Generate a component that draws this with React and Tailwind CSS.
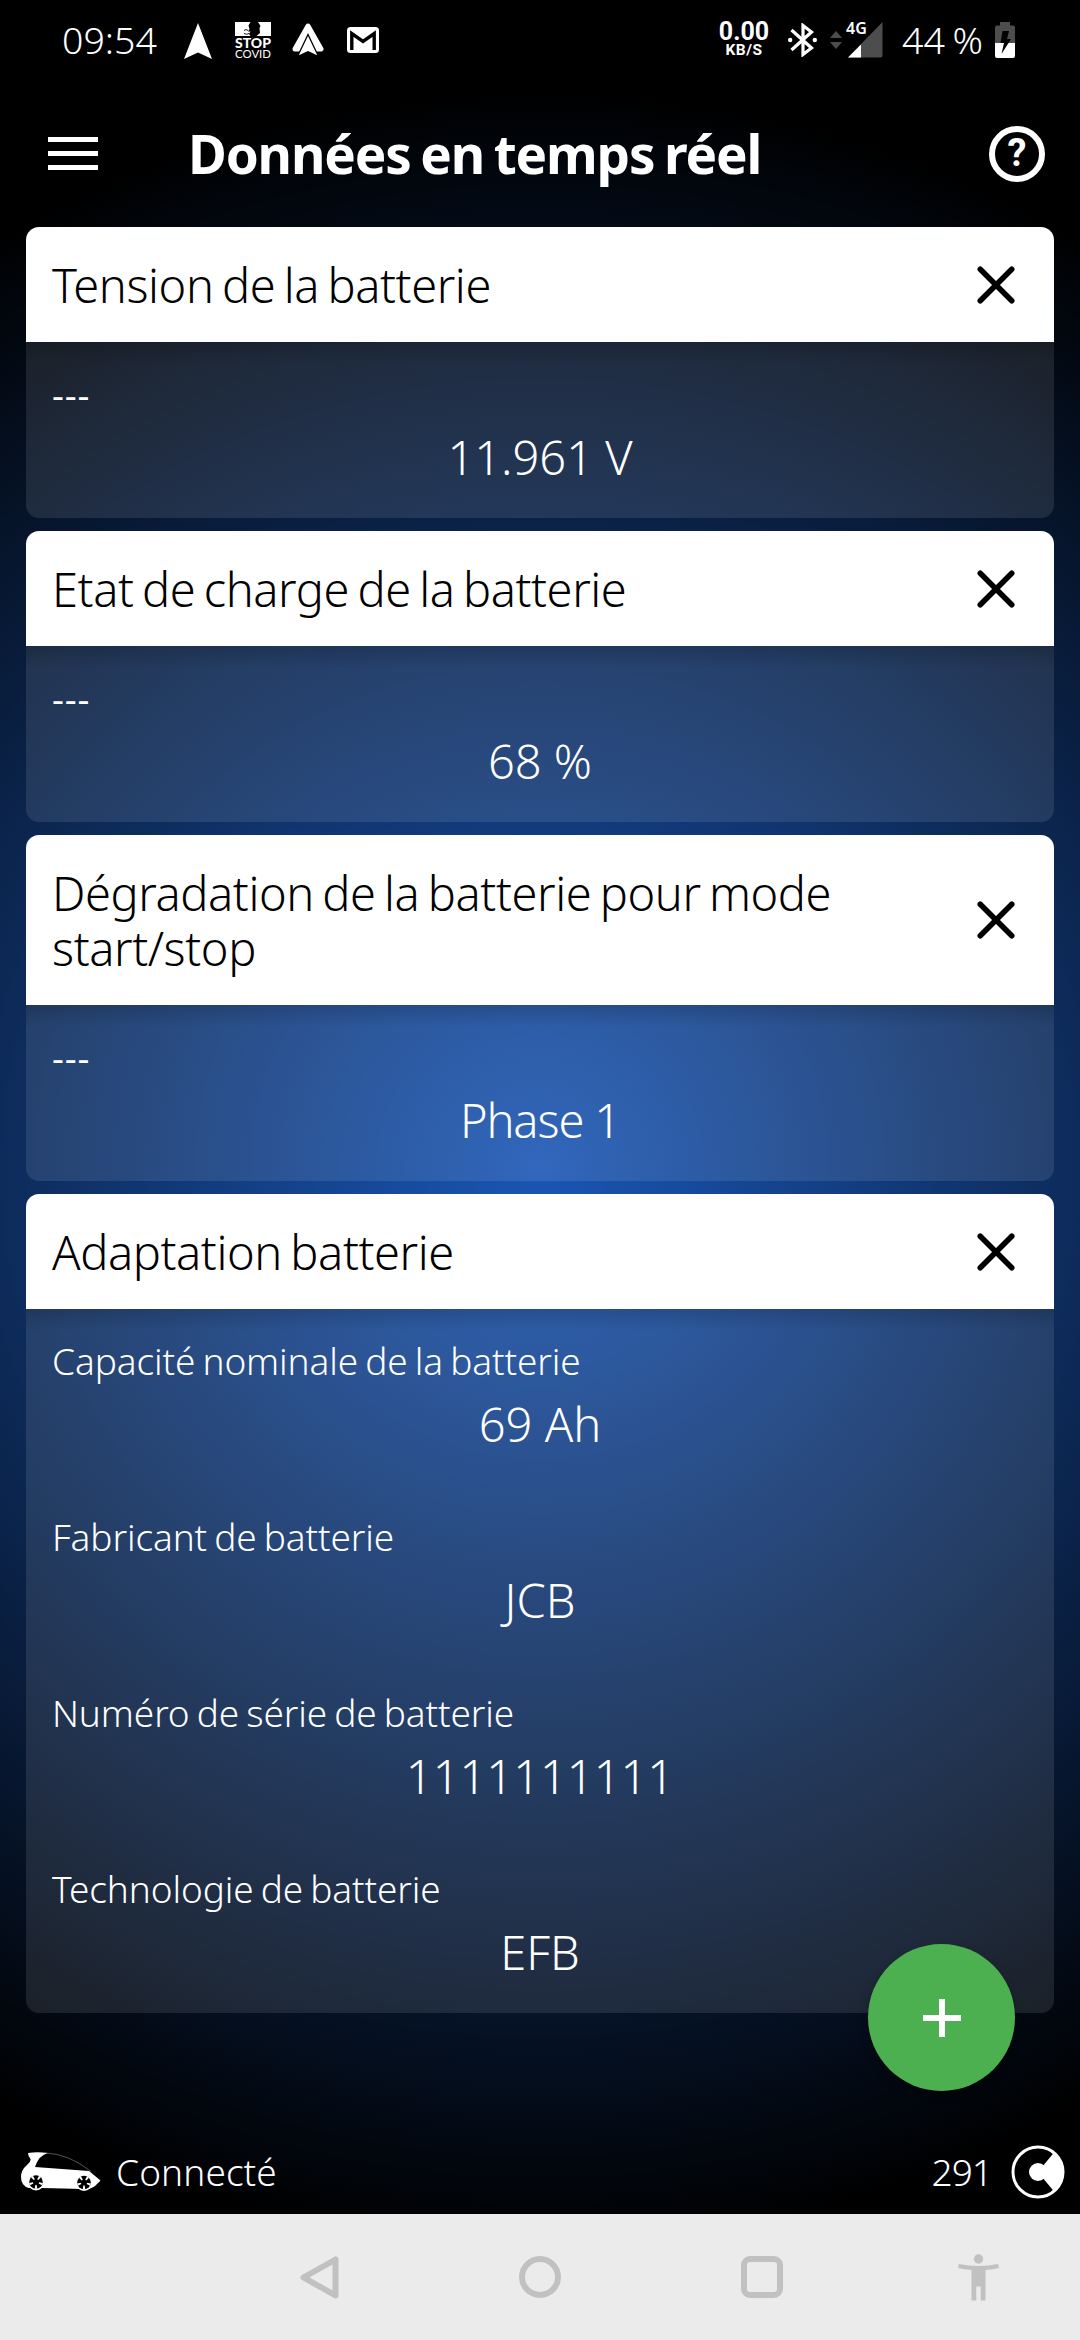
import { X } from "lucide-react";

const cards = [
  {
    title: "Tension de la batterie",
    rows: [{ label: "---", value: "11.961 V" }],
  },
  {
    title: "Etat de charge de la batterie",
    rows: [{ label: "---", value: "68 %" }],
  },
  {
    title: "Dégradation de la batterie pour mode start/stop",
    rows: [{ label: "---", value: "Phase 1" }],
  },
  {
    title: "Adaptation batterie",
    rows: [
      { label: "Capacité nominale de la batterie", value: "69 Ah" },
      { label: "Fabricant de batterie", value: "JCB" },
      { label: "Numéro de série de batterie", value: "1111111111" },
      { label: "Technologie de batterie", value: "EFB" },
    ],
  },
];

const StopCovidIcon = () => (
  <svg
    className="ml-[23px] h-[36px] w-[36px] overflow-visible"
    viewBox="0 0 36 36"
    fill="white"
  >
    <path d="M0 0H15.5L13.5 3.5L14.5 7L13 9.5H15.5L14 12L15.5 14H0Z" />
    <path d="M23 0H36V14H21.5L25 11L24.5 6L25.5 4Z" />
    <path
      d="M9 8.5q2-2 4 0M9 11.5q3 1.5 5 0"
      stroke="black"
      strokeWidth="0.9"
      fill="none"
    />
    <text
      x="0"
      y="26"
      textLength="36"
      lengthAdjust="spacingAndGlyphs"
      className="font-['Lato',sans-serif] text-[13px] font-black"
    >
      STOP
    </text>
    <text
      x="0"
      y="36"
      textLength="36"
      lengthAdjust="spacingAndGlyphs"
      className="font-['Lato',sans-serif] text-[11px]"
    >
      COVID
    </text>
  </svg>
);

const StatusBar = () => (
  <div className="flex h-[80px] items-center pl-[62px]">
    <span className="w-[122px] text-[37.5px] font-[350]">09:54</span>
    <svg className="mt-[2px] h-[36px] w-[28px]" viewBox="0 0 28 36" fill="white">
      <path d="M14 0L28 36L14 29.5L0 36Z" />
    </svg>
    <StopCovidIcon />
    <svg className="ml-[21px] h-[34px] w-[32px]" viewBox="0 0 32 34">
      <path
        d="M16 3L29 26H3Z"
        fill="white"
        stroke="white"
        strokeWidth="5"
        strokeLinejoin="round"
      />
      <path
        d="M16 11.5L26.5 33.5L16 28.8L5.5 33.5Z"
        fill="white"
        stroke="black"
        strokeWidth="1.3"
      />
      <path d="M2 30H6.5L3.5 34H0ZM30 30H25.5L28.5 34H32Z" fill="black" />
    </svg>
    <svg className="ml-[23px] h-[26px] w-[32px]" viewBox="0 0 32 26">
      <rect width="32" height="26" rx="3.5" fill="white" />
      <path
        d="M4.8 23V6.5L16 14.5L27.2 6.5V23"
        fill="none"
        stroke="black"
        strokeWidth="3.4"
      />
    </svg>

    <div className="ml-auto flex w-[50px] flex-col items-center pt-[1px] font-['Roboto',sans-serif] font-bold">
      <span className="text-[25px] leading-[20px]">0.00</span>
      <span className="text-[15.5px] leading-[17px] tracking-[0.5px]">KB/S</span>
    </div>
    <svg
      className="ml-[19px] h-[34px] w-[29px]"
      viewBox="0 0 29 34"
      fill="none"
      stroke="white"
      strokeWidth="3.2"
    >
      <path d="M3.5 7L23.5 25L15 31.5V2.5L23.5 9L3.5 27" />
      <circle cx="2.2" cy="17" r="2.2" fill="white" stroke="none" />
      <circle cx="26.8" cy="17" r="2.2" fill="white" stroke="none" />
    </svg>
    <svg className="ml-[13px] h-[18px] w-[12px]" viewBox="0 0 12 18" fill="#4d4d4d">
      <path d="M6 0L12 7H0ZM0 11H12L6 18Z" />
    </svg>
    <svg className="ml-[4px] h-[36px] w-[37px] overflow-visible" viewBox="0 0 37 36">
      <path d="M36.5 0V33.5Q36.5 35.500 34.500 35.500H2Z" fill="#4d4d4d" />
      <path d="M15 22.500V35.500H2Z" fill="white" />
      <text
        x="0"
        y="12"
        fill="white"
        stroke="black"
        strokeWidth="2"
        paintOrder="stroke"
        className="font-['Noto_Sans',sans-serif] text-[16px] font-semibold"
      >
        4G
      </text>
    </svg>
    <span className="ml-[19px] w-[93px] text-[37.5px] font-[350] whitespace-nowrap [word-spacing:-2px]">
      44 %
    </span>
    <svg className="mr-[65px] h-[36px] w-[20px]" viewBox="0 0 20 36">
      <path
        d="M5 0H15V3.5H18Q20 3.5 20 5.5V21H0V5.5Q0 3.5 2 3.5H5Z"
        fill="#4d4d4d"
      />
      <path d="M0 21H20V34Q20 36 18 36H2Q0 36 0 34Z" fill="white" />
      <path d="M7.5 9H14L12 17H16L6.5 32L9 21H5.5Z" fill="black" />
    </svg>
  </div>
);

const CardSection = ({ card }) => (
  <section className="overflow-hidden rounded-[13px]">
    <div className="flex items-center justify-between bg-white pt-[31px] pr-[37px] pb-[29px] pl-[26px] text-black">
      <h2 className="max-w-[860px] text-[47px] leading-[55px] font-[350] tracking-[-0.4px] [word-spacing:-3.4px]">
        {card.title}
      </h2>
      <X className="-mt-[2px] size-[42px] scale-[1.5]" strokeWidth={2.1} />
    </div>
    <div className="bg-white/10 bg-linear-to-b from-black/15 to-transparent bg-[length:100%_22px] bg-no-repeat">
      {card.rows.map((row) => (
        <div key={row.label} className="h-[176px] px-[26px] pt-[27px]">
          <p
            className={
              row.label === "---"
                ? "text-[37px] leading-[50px] font-normal tracking-[0.8px]"
                : "text-[37px] leading-[50px] font-[350] tracking-[-0.1px] [word-spacing:-2.4px]"
            }
          >
            {row.label}
          </p>
          <p
            className={
              row.value === "Phase 1"
                ? "mt-[5px] text-center text-[47px] leading-[66px] font-[350] tracking-[-1.1px]"
                : "mt-[5px] text-center text-[47px] leading-[66px] font-[350]"
            }
          >
            {row.value}
          </p>
        </div>
      ))}
    </div>
  </section>
);

const Wheel = ({ cx, cy }) => (
  <g transform={`translate(${cx} ${cy})`}>
    <circle r="8.5" fill="white" />
    <circle r="6.8" fill="black" />
    {[0, 72, 144, 216, 288].map((a) => (
      <path
        key={a}
        d="M-1.2 -6.8H1.2L0.7 -3H-0.7Z"
        fill="white"
        transform={`rotate(${a + 36})`}
      />
    ))}
  </g>
);

const Footer = () => (
  <footer className="flex h-[84px] items-center pr-[15px] pl-[21px] text-[37px] font-[350]">
    <svg className="h-[40px] w-[80px]" viewBox="0 0 80 40">
      <path
        d="M7 1Q16 -0.5 27 1Q18 3 14 15L68 19L79.5 28.5L74 34Q70 37.5 62 37L22 36H8Q0 34 0 25Q0 18 6 13Q10 10 9.5 7Q7 4 7 1Z"
        fill="white"
      />
      <path d="M25 1Q48 2 70 19.5" fill="none" stroke="#777" strokeWidth="0.7" />
      <Wheel cx={15} cy={30} />
      <Wheel cx={63} cy={30.5} />
    </svg>
    <span className="ml-[15px] tracking-[0.1px]">Connecté</span>
    <span className="ml-auto tracking-[-1px]">291</span>
    <svg className="ml-[19px] size-[54px]" viewBox="-27 -27 54 54">
      <circle r="25" fill="none" stroke="white" strokeWidth="3" />
      <circle r="9" fill="white" />
      <path d="M4 -5L16.5 -20A26 26 0 0 1 16.5 20L4 5Z" fill="white" />
    </svg>
  </footer>
);

const NavBar = () => (
  <nav className="flex h-[126px] items-center bg-[#ebebeb] pl-[300px]">
    <svg
      className="h-[43px] w-[39px]"
      viewBox="0 0 39 43"
      fill="none"
      stroke="#c1c1c1"
      strokeWidth="6"
      strokeLinejoin="round"
    >
      <path d="M3.5 21.5L35.5 3.5V39.5Z" />
    </svg>
    <div className="ml-[180px] size-[42px] rounded-full border-6 border-[#c1c1c1]" />
    <div className="ml-[180px] size-[42px] rounded-[9px] border-6 border-[#c1c1c1]" />
    <svg className="ml-[175px] h-[47px] w-[41px]" viewBox="0 0 41 47" fill="#c1c1c1">
      <circle cx="20.5" cy="5" r="4.7" />
      <path d="M0.8 10Q20.5 13.8 40.2 10L41 14Q35 15.5 27.5 16V46.5H22.7V32.5H18.3V46.5H13.5V16Q6 15.5 0 14Z" />
    </svg>
  </nav>
);

const App = () => {
  return (
    <div className="relative flex h-[2340px] w-[1080px] flex-col overflow-hidden bg-[radial-gradient(circle_1080px_at_540px_1170px,#1a56b5,#000)] font-['Noto_Sans',sans-serif] text-white">
      <StatusBar />
      <header className="flex h-[147px] items-center pr-[35px] pl-[48px]">
        <div className="flex w-[50px] flex-col gap-[8.5px]">
          <div className="h-[5.5px] bg-white" />
          <div className="h-[5.5px] bg-white" />
          <div className="h-[5.5px] bg-white" />
        </div>
        <h1 className="ml-[90px] text-[53px] font-bold tracking-[-1.15px] [word-spacing:-3px]">
          Données en temps réel
        </h1>
        <button className="ml-auto flex size-[56px] items-center justify-center rounded-full border-6 border-white font-['Roboto',sans-serif] text-[38px] font-bold">
          ?
        </button>
      </header>

      <main className="flex flex-1 flex-col gap-[13px] px-[26px]">
        {cards.map((card) => (
          <CardSection key={card.title} card={card} />
        ))}
      </main>

      <button className="absolute top-[1944px] left-[868px] flex size-[147px] items-center justify-center rounded-full bg-[#4caf50] shadow-[0_4px_10px_rgba(0,0,0,0.25)]">
        <svg className="size-[38px]" viewBox="0 0 38 38" stroke="white" strokeWidth="6">
          <path d="M19 0V38M0 19H38" />
        </svg>
      </button>

      <Footer />
      <NavBar />
    </div>
  );
};

export default App;
